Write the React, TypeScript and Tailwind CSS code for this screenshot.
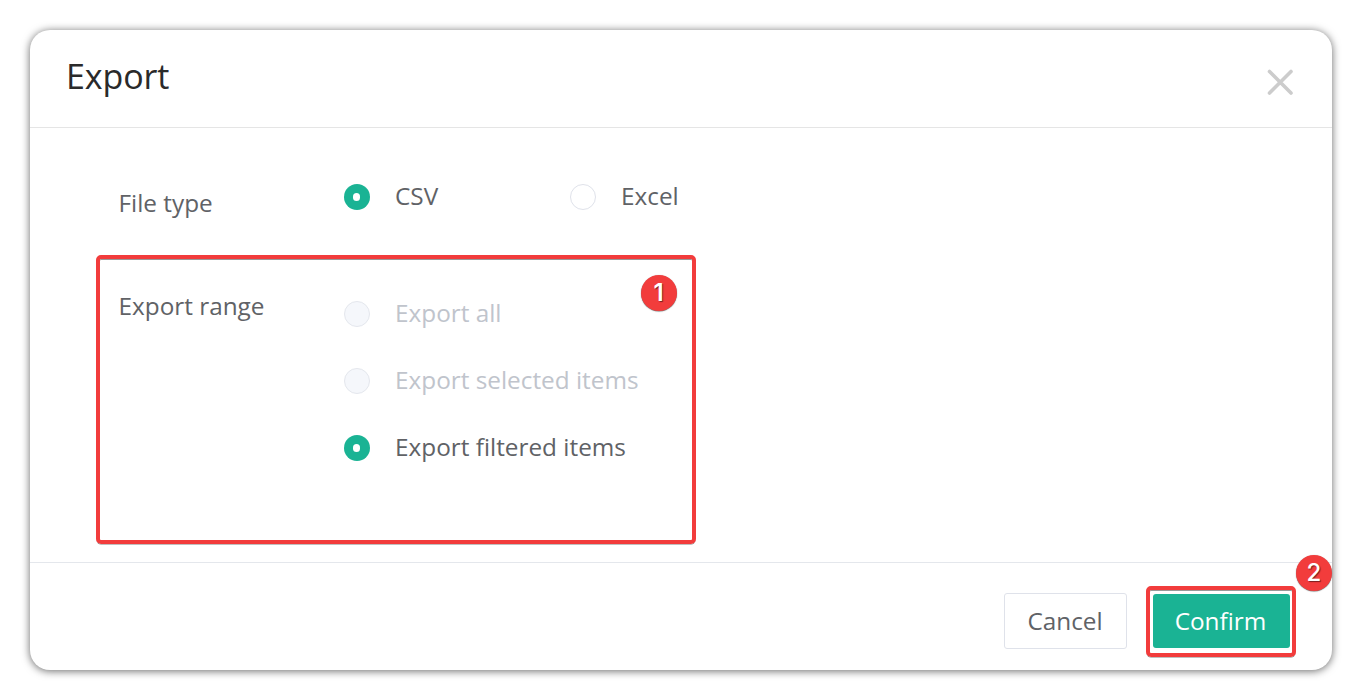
import type { ReactNode } from "react";

type RadioState = "on" | "off" | "disabled";

const dotStyles: Record<RadioState, string> = {
  on: "bg-[#1ab394]",
  off: "border border-[#dfe2ea] bg-white",
  disabled: "border border-[#e4e7ed] bg-[#f5f7fb]",
};

function Radio({ state, children }: { state: RadioState; children: ReactNode }) {
  return (
    <label className="flex h-[34px] items-center gap-[25px]">
      <span className={`flex size-[26px] shrink-0 items-center justify-center rounded-full ${dotStyles[state]}`}>
        {state === "on" && <span className="mr-px h-2 w-[7px] rounded-full bg-white" />}
      </span>
      <span className={`-mt-0.5 whitespace-nowrap ${state === "disabled" ? "text-[#c0c4cc]" : "text-[#606266]"}`}>
        {children}
      </span>
    </label>
  );
}

function Badge({ children, className }: { children: ReactNode; className: string }) {
  return (
    <span className={`flex size-9 items-center justify-center rounded-full bg-[#f23c3c] font-['Inter',sans-serif] text-[24px] leading-none text-white shadow-[0_0.5px_1px_rgba(0,0,0,0.6)] [text-shadow:1px_1px_1px_rgba(0,0,0,0.5)] ${className}`}>
      {children}
    </span>
  );
}

export default function App() {
  return (
    <div className="h-[690px] w-[1362px] bg-white p-[30px] font-['Open_Sans','Noto_Sans',sans-serif] text-[24.33px] leading-[34px] text-[#606266]">
      <section className="relative flex h-[640px] w-[1302px] flex-col rounded-[20px] bg-white shadow-[0_1px_9px_rgba(0,0,0,0.6)]">
        <header className="flex h-[98px] shrink-0 items-start justify-between border-b border-[#e5e5e5] pt-[23px] pr-[38.5px] pl-9">
          <h1 className="text-[34px] leading-[46px] tracking-[-0.1px] text-[#2a2a2a]">Export</h1>
          <svg className="mt-[15.5px] size-[27px]" viewBox="0 0 27 27" fill="none" stroke="#cccccc" strokeWidth="3.6" strokeLinecap="round">
            <path d="M2.5 2.5 24 24M24 2.5 2.5 24" />
          </svg>
        </header>
        <main className="flex grow flex-col pt-[52px] pl-[88.5px]">
          <div className="flex items-start">
            <span className="mt-[6px] w-[225.5px]">File type</span>
            <div className="flex">
              <div className="w-[226px]">
                <Radio state="on">CSV</Radio>
              </div>
              <Radio state="off">Excel</Radio>
            </div>
          </div>
          <div className="mt-[69px] flex items-start">
            <span className="w-[225.5px]">Export range</span>
            <div className="mt-2 flex flex-col gap-[33px]">
              <Radio state="disabled">Export all</Radio>
              <Radio state="disabled">Export selected items</Radio>
              <Radio state="on">Export filtered items</Radio>
            </div>
          </div>
        </main>
        <footer className="flex h-[108px] shrink-0 items-start justify-end gap-[26px] border-t border-[#e4e7ec] pt-[30px] pr-[42px]">
          <button className="h-14 w-[123px] rounded-[3px] border border-[#dfe2ea] bg-white pr-px text-[#606266]">Cancel</button>
          <button className="mt-px h-[54px] w-[137px] rounded-[3px] bg-[#1ab394] pr-[2px] text-white">Confirm</button>
        </footer>
        <div className="absolute top-[225px] left-[66px] h-[289px] w-[600px] rounded-[5px] border-4 border-[#f23c3c] shadow-[0_1px_0_-0.5px_rgba(0,0,0,0.5),inset_0_1px_0_rgba(0,0,0,0.4)]" />
        <div className="absolute top-[245px] left-[610.5px]"><Badge className="font-semibold">1</Badge></div>
        <div className="absolute top-[556px] left-[1116px] h-[71px] w-[150px] rounded-[5px] border-4 border-[#f23c3c] shadow-[0_1px_0_-0.5px_rgba(0,0,0,0.5),inset_0_1px_0_rgba(0,0,0,0.4)]" />
        <div className="absolute top-[525px] left-[1266px]"><Badge className="font-medium">2</Badge></div>
      </section>
    </div>
  );
}
